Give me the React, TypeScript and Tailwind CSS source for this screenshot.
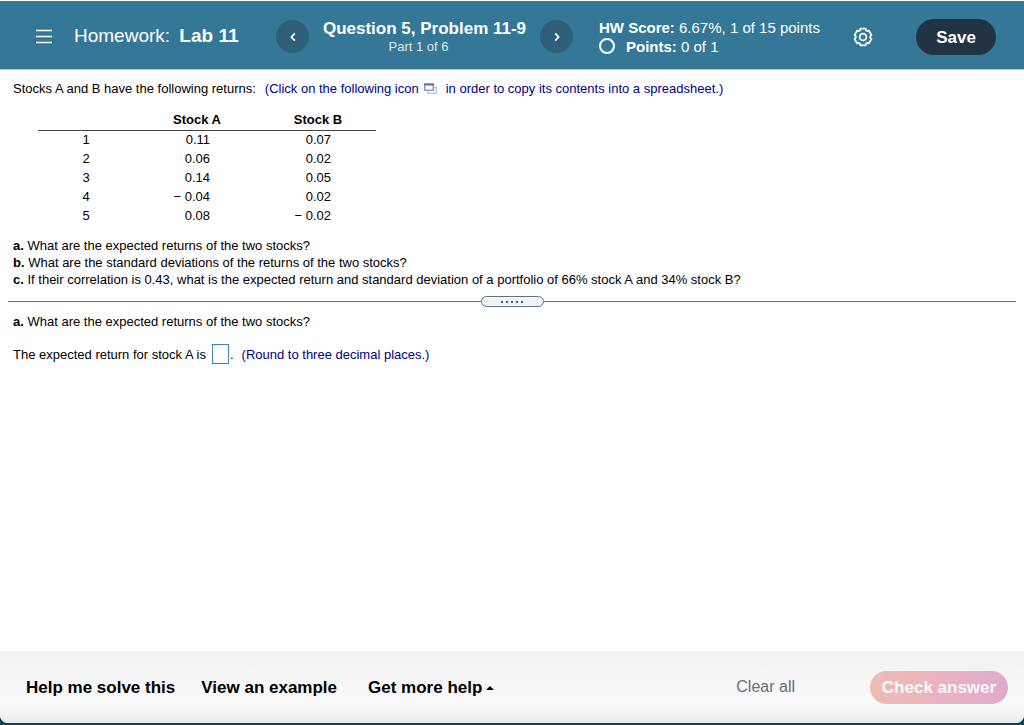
import React from "react";

interface StockReturn {
  period: number;
  stockA: string;
  stockB: string;
}

const RETURNS: StockReturn[] = [
  { period: 1, stockA: "0.11", stockB: "0.07" },
  { period: 2, stockA: "0.06", stockB: "0.02" },
  { period: 3, stockA: "0.14", stockB: "0.05" },
  { period: 4, stockA: "− 0.04", stockB: "0.02" },
  { period: 5, stockA: "0.08", stockB: "− 0.02" },
];

const MenuIcon = () => (
  <svg width="16" height="16" viewBox="0 0 16 16" fill="none">
    <path d="M0 1.5H16M0 7.5H16M0 13.5H16" stroke="#fff" strokeWidth="1.6" />
  </svg>
);

const ChevronIcon = ({ direction }: { direction: "left" | "right" }) => (
  <svg width="8" height="10" viewBox="0 0 8 10" fill="none">
    <path
      d={direction === "left" ? "M5.8 1.4L2.4 5L5.8 8.6" : "M2.2 1.4L5.6 5L2.2 8.6"}
      stroke="#fff"
      strokeWidth="1.7"
    />
  </svg>
);

const GearIcon = () => (
  <svg width="20" height="20" viewBox="0 0 20 20" fill="none" stroke="#fff">
    <path
      d="M7.3 1.7H12.7L13 3.5L14.1 4.1L15.8 3.5L18.5 8.2L17.2 9.4V10.6L18.5 11.8L15.8 16.5L14.1 15.9L13 16.5L12.7 18.3H7.3L7 16.5L5.9 15.9L4.2 16.5L1.5 11.8L2.8 10.6V9.4L1.5 8.2L4.2 3.5L5.9 4.1L7 3.5Z"
      strokeWidth="1.7"
      strokeLinejoin="round"
    />
    <circle cx="10" cy="10" r="3.4" strokeWidth="1.7" />
  </svg>
);

const CopyIcon = () => (
  <svg width="13" height="11" viewBox="0 0 13 11" fill="none">
    <rect x="3.75" y="4.25" width="8.5" height="6" stroke="#c3c9e2" strokeWidth="1.5" />
    <rect x="0.75" y="1.25" width="8.5" height="6" fill="#fff" stroke="#8d97c6" strokeWidth="1.5" />
    <path d="M0 1.5H10" stroke="#5f6cae" strokeWidth="2" />
  </svg>
);

const Header = () => (
  <header className="mt-px flex h-[69px] items-center border-b border-[#b4c8d3] bg-[#347796] pt-[3px] pr-7 pl-9 text-white">
    <button type="button" aria-label="Menu" className="flex w-4 shrink-0 cursor-pointer">
      <MenuIcon />
    </button>
    <h1 className="ml-[22px] w-[202px] shrink-0 text-[19px] whitespace-nowrap">
      Homework: <b className="ml-1">Lab 11</b>
    </h1>
    <nav className="flex shrink-0 items-center" aria-label="Question">
      <button
        type="button"
        aria-label="Previous question"
        className="flex size-[33px] cursor-pointer items-center justify-center rounded-full bg-[#2f607a]"
      >
        <ChevronIcon direction="left" />
      </button>
      <div className="w-[231px] text-center whitespace-nowrap">
        <h2 className="text-[17px] leading-5 font-bold">Question 5, Problem 11-9</h2>
        <p className="pr-3 text-[13px] leading-4 text-[#dfeaf0]">Part 1 of 6</p>
      </div>
      <button
        type="button"
        aria-label="Next question"
        className="flex size-[33px] cursor-pointer items-center justify-center rounded-full bg-[#2f607a]"
      >
        <ChevronIcon direction="right" />
      </button>
    </nav>
    <div className="ml-[26px] text-[15px] leading-[19px] whitespace-nowrap">
      <p>
        <b>HW Score:</b> 6.67%, 1 of 15 points
      </p>
      <p className="flex items-center">
        <span className="mr-[11px] size-4 rounded-full border-2 border-white" />
        <span>
          <b>Points:</b> 0 of 1
        </span>
      </p>
    </div>
    <div className="ml-auto flex items-center gap-[43px]">
      <button type="button" aria-label="Settings" className="cursor-pointer">
        <GearIcon />
      </button>
      <button
        type="button"
        className="h-9 w-20 cursor-pointer rounded-full bg-[#223444] pt-[2px] text-[17px] font-bold"
      >
        Save
      </button>
    </div>
  </header>
);

const ReturnsTable = () => (
  <table className="mt-[13px] ml-[25px] text-center">
    <thead>
      <tr className="h-5 border-b border-[#444]">
        <th className="w-24" aria-label="Period" />
        <th className="w-[126px]">Stock A</th>
        <th className="w-[116px]">Stock B</th>
      </tr>
    </thead>
    <tbody>
      {RETURNS.map((row) => (
        <tr key={row.period} className="h-[19px]">
          <td>{row.period}</td>
          <td className="pr-[50px] text-right">{row.stockA}</td>
          <td className="pr-[45px] text-right">{row.stockB}</td>
        </tr>
      ))}
    </tbody>
  </table>
);

const Divider = () => (
  <div className="mx-2 mt-2 flex items-center">
    <span className="h-px flex-1 bg-[#5f6f7f]" />
    <button
      type="button"
      aria-label="Resize panels"
      className="flex h-[11px] w-[63px] cursor-row-resize items-center justify-center gap-[3px] rounded-full border border-[#5f7488] bg-[#f3f5f7]"
    >
      {[0, 1, 2, 3, 4].map((dot) => (
        <span key={dot} className="size-[2px] bg-[#4b5560]" />
      ))}
    </button>
    <span className="h-px flex-1 bg-[#5f6f7f]" />
  </div>
);

const Footer = () => (
  <footer className="flex h-[72px] items-center rounded-b-lg bg-linear-to-b from-[#f1f1f1] via-[#fafafa] via-70% to-[#ececec] pr-4 pl-[26px] text-[17px] font-bold whitespace-nowrap">
    <button type="button" className="cursor-pointer pt-[2px]">
      Help me solve this
    </button>
    <button type="button" className="ml-[26px] cursor-pointer pt-[2px]">
      View an example
    </button>
    <button type="button" className="ml-[31px] flex cursor-pointer items-center gap-1 pt-[2px]">
      Get more help
      <svg width="8" height="4" viewBox="0 0 8 4">
        <path d="M0 4L4 0L8 4Z" fill="#000" />
      </svg>
    </button>
    <button type="button" className="mr-[75px] ml-auto cursor-pointer text-base font-normal text-[#6a6c75]">
      Clear all
    </button>
    <button
      type="button"
      className="h-[33px] w-[138px] cursor-pointer rounded-full bg-linear-to-r from-[#efbcb4] via-[#eab2c3] to-[#dfabcb] pt-[2px] text-white/90"
    >
      Check answer
    </button>
  </footer>
);

export default function App() {
  const [answer, setAnswer] = React.useState("");

  return (
    <div className="flex min-h-screen flex-col bg-[#0d4459] pb-[2px] font-['Liberation_Sans',Arial,sans-serif] text-black">
      <div className="flex flex-1 flex-col rounded-b-lg bg-white">
        <Header />
        <main className="flex-1 text-[13px] leading-[17px]">
          <section className="px-[13px] pt-[10px]">
            <p className="flex items-center">
              Stocks A and B have the following returns:
              <span className="ml-[9px] flex items-center text-[#000080]">
                (Click on the following icon
                <button type="button" aria-label="Copy table" className="mr-[9px] ml-[5px] cursor-pointer">
                  <CopyIcon />
                </button>
                in order to copy its contents into a spreadsheet.)
              </span>
            </p>
            <ReturnsTable />
            <div className="mt-3">
              <p>
                <b>a.</b> What are the expected returns of the two stocks?
              </p>
              <p>
                <b>b.</b> What are the standard deviations of the returns of the two stocks?
              </p>
              <p>
                <b>c.</b> If their correlation is 0.43, what is the expected return and standard
                deviation of a portfolio of 66% stock A and 34% stock B?
              </p>
            </div>
          </section>
          <Divider />
          <section className="px-[13px] pt-[6px]">
            <p>
              <b>a.</b> What are the expected returns of the two stocks?
            </p>
            <div className="mt-[14px] flex items-center">
              <label htmlFor="answer">The expected return for stock A is</label>
              <input
                id="answer"
                type="text"
                value={answer}
                onChange={(event) => setAnswer(event.target.value)}
                className="mr-px ml-[6px] h-5 w-[17px] border border-[#3a87a8] outline-none"
              />
              .<span className="ml-2 text-[#000080]">(Round to three decimal places.)</span>
            </div>
          </section>
        </main>
        <Footer />
      </div>
    </div>
  );
}
